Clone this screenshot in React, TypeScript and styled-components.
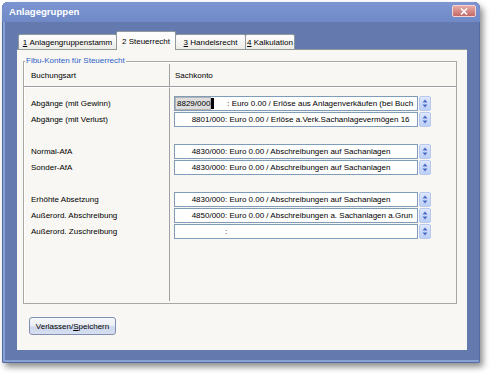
import React from 'react';
import styled, { createGlobalStyle } from 'styled-components';

const GlobalStyle = createGlobalStyle`
  html, body {
    margin: 0;
    padding: 0;
    background: #ffffff;
  }
  body {
    font-family: "Liberation Sans", Arial, sans-serif;
    font-size: 8px;
    color: #000000;
  }
`;

const Page = styled.div`
  width: 490px;
  height: 377px;
  padding: 2px 0 0 2px;
  box-sizing: border-box;
`;

const Window = styled.div`
  width: 478px;
  height: 361px;
  display: flex;
  flex-direction: column;
  background: #6479ad;
  border-radius: 6px 6px 2px 2px;
  box-shadow: 3px 4px 6px rgba(0, 0, 0, 0.45), inset 0 0 0 1px #566b9f,
    inset 2px 0 0 1px #8aa1d6, inset 0 -2px 0 1px #8aa1d6;
  overflow: hidden;
`;

const TitleBar = styled.div`
  height: 20px;
  flex: none;
  display: flex;
  align-items: center;
  justify-content: space-between;
  padding: 0 4px 0 7px;
  background: linear-gradient(#7d96d2, #6f89c7);
  border-radius: 6px 6px 0 0;
`;

const Title = styled.div`
  color: #ffffff;
  font-weight: bold;
  font-size: 9.6px;
  margin-top: -2px;
`;

const CloseButton = styled.div`
  width: 24px;
  height: 12px;
  box-sizing: border-box;
  margin-top: -2px;
  border: 1px solid #f3d4d0;
  border-radius: 2px;
  background: linear-gradient(#e7aba6, #c56a66);
  display: flex;
  align-items: center;
  justify-content: center;
`;

const Frame = styled.div`
  flex: 1;
  display: flex;
  flex-direction: column;
  padding: 10px 13px 13px 15px;
`;

const TabStrip = styled.div`
  height: 18px;
  display: flex;
  align-items: flex-end;
  padding-left: 1px;
  position: relative;
  z-index: 1;
  margin-bottom: -1px;
`;

const Tab = styled.div<{ $w: number; $active?: boolean }>`
  width: ${(p) => p.$w}px;
  height: ${(p) => (p.$active ? 19 : 16)}px;
  box-sizing: border-box;
  margin-left: -1px;
  &:first-child {
    margin-left: 0;
  }
  display: flex;
  align-items: center;
  justify-content: center;
  white-space: nowrap;
  border: 1px solid #919b9c;
  border-bottom: ${(p) => (p.$active ? 'none' : '1px solid #919b9c')};
  border-radius: 2px 2px 0 0;
  background: ${(p) =>
    p.$active ? 'linear-gradient(#ffffff, #f8f7f3)' : 'linear-gradient(#ffffff, #ecebe6)'};
  position: relative;
  z-index: ${(p) => (p.$active ? 2 : 1)};
`;

const Panel = styled.div`
  flex: 1;
  display: flex;
  flex-direction: column;
  background: #f8f7f3;
  border-top: 1px solid #919b9c;
  padding: 11px 10px 0 6px;
`;

const GroupBox = styled.div`
  position: relative;
  height: 243px;
  box-sizing: border-box;
  border: 1px solid #a9a9a4;
  box-shadow: inset 1px 1px 0 #ffffff;
  padding: 2px 0;
`;

const Legend = styled.div`
  position: absolute;
  top: -6px;
  left: 1px;
  padding: 0 1px;
  background: #f8f7f3;
  color: #2d61c8;
  line-height: 10px;
`;

const Table = styled.div`
  height: 100%;
  display: grid;
  grid-template-columns: 146px 1fr;
  grid-template-rows: 23px 1fr;
`;

const HeadCell = styled.div<{ $left?: boolean }>`
  display: flex;
  align-items: center;
  padding-left: ${(p) => (p.$left ? 7 : 5)}px;
  padding-top: 1px;
  border-bottom: 1px solid #a0a0a0;
  border-right: ${(p) => (p.$left ? '1px solid #a0a0a0' : 'none')};
`;

const BodyCell = styled.div<{ $left?: boolean }>`
  display: flex;
  flex-direction: column;
  gap: 1px;
  padding: 8px 0 0 ${(p) => (p.$left ? 7 : 4)}px;
  border-right: ${(p) => (p.$left ? '1px solid #a0a0a0' : 'none')};
  border-top: 1px solid #ffffff;
`;

const Label = styled.div`
  height: 15px;
  display: flex;
  align-items: center;
  white-space: nowrap;
`;

const Spacer = styled.div`
  height: 15px;
`;

const Combo = styled.div`
  height: 15px;
  width: 257px;
  display: flex;
  gap: 1px;
`;

const Field = styled.div`
  flex: 1;
  min-width: 0;
  box-sizing: border-box;
  border: 1px solid #7f9db9;
  background: #ffffff;
  display: flex;
  align-items: center;
  white-space: nowrap;
  overflow: hidden;
`;

const Account = styled.span`
  width: 50px;
  flex: none;
  text-align: right;
`;

const EditBox = styled.span`
  width: 50px;
  flex: none;
  display: flex;
  align-items: center;
  height: 13px;
`;

const EditText = styled.span`
  display: flex;
  align-items: center;
  height: 13px;
  padding: 0 1px 0 2px;
  background: #dedede;
  box-shadow: inset 0 0 0 1px #b4b4b4;
`;

const Caret = styled.span`
  width: 3px;
  height: 11px;
  background: #000000;
`;

const Rest = styled.span`
  flex: none;
`;

const ArrowButton = styled.div`
  width: 12px;
  flex: none;
  box-sizing: border-box;
  border: 1px solid #b7c8f0;
  border-radius: 2px;
  background: linear-gradient(#dde7fc, #bccff7);
  display: flex;
  align-items: center;
  justify-content: center;
`;

const Footer = styled.div`
  padding: 13px 0 0 6px;
`;

const Button = styled.div`
  width: 87px;
  height: 18px;
  box-sizing: border-box;
  border: 1px solid #8190b2;
  border-radius: 3px;
  background: linear-gradient(#f6f7fa 0%, #e9edf5 50%, #cdd7ec 55%, #d7dff0 100%);
  display: flex;
  align-items: center;
  justify-content: center;
  white-space: nowrap;
`;

type Row =
  | null
  | {
      label: string;
      account: string;
      rest: string;
      editing?: boolean;
    };

const rows: Row[] = [
  {
    label: 'Abgänge (mit Gewinn)',
    account: '8829/000',
    rest: '\u00a0: Euro 0.00 / Erlöse aus Anlagenverkäufen (bei Buch',
    editing: true,
  },
  {
    label: 'Abgänge (mit Verlust)',
    account: '8801/000',
    rest: ': Euro 0.00 / Erlöse a.Verk.Sachanlagevermögen 16',
  },
  null,
  {
    label: 'Normal-AfA',
    account: '4830/000',
    rest: ': Euro 0.00 / Abschreibungen auf Sachanlagen',
  },
  {
    label: 'Sonder-AfA',
    account: '4830/000',
    rest: ': Euro 0.00 / Abschreibungen auf Sachanlagen',
  },
  null,
  {
    label: 'Erhöhte Absetzung',
    account: '4830/000',
    rest: ': Euro 0.00 / Abschreibungen auf Sachanlagen',
  },
  {
    label: 'Außerord. Abschreibung',
    account: '4850/000',
    rest: ': Euro 0.00 / Abschreibungen a. Sachanlagen a.Grun',
  },
  {
    label: 'Außerord. Zuschreibung',
    account: '',
    rest: ':',
  },
];

const UpDownIcon = () => (
  <svg width="6" height="9" viewBox="0 0 6 9">
    <path d="M3 0.5 L5.5 3.5 H0.5 Z" fill="#4a6cc3" />
    <path d="M3 8.5 L5.5 5.5 H0.5 Z" fill="#4a6cc3" />
  </svg>
);

const CloseIcon = () => (
  <svg width="8" height="7" viewBox="0 0 8 7">
    <path d="M1 0.5 L7 6.5 M7 0.5 L1 6.5" stroke="#ffffff" strokeWidth="1.6" />
  </svg>
);

const App: React.FC = () => {
  return (
    <>
      <GlobalStyle />
      <Page>
        <Window>
          <TitleBar>
            <Title>Anlagegruppen</Title>
            <CloseButton>
              <CloseIcon />
            </CloseButton>
          </TitleBar>
          <Frame>
            <TabStrip>
              <Tab $w={99}>
                <u>1</u>&nbsp;Anlagengruppenstamm
              </Tab>
              <Tab $w={60} $active>
                2 Steuerrecht
              </Tab>
              <Tab $w={71}>
                <u>3</u>&nbsp;Handelsrecht
              </Tab>
              <Tab $w={50}>
                <u>4</u>&nbsp;Kalkulation
              </Tab>
            </TabStrip>
            <Panel>
              <GroupBox>
                <Legend>Fibu-Konten für Steuerrecht</Legend>
                <Table>
                  <HeadCell $left>Buchungsart</HeadCell>
                  <HeadCell>Sachkonto</HeadCell>
                  <BodyCell $left>
                    {rows.map((r, i) =>
                      r ? <Label key={i}>{r.label}</Label> : <Spacer key={i} />
                    )}
                  </BodyCell>
                  <BodyCell>
                    {rows.map((r, i) =>
                      r ? (
                        <Combo key={i}>
                          <Field>
                            {r.editing ? (
                              <EditBox>
                                <EditText>{r.account}</EditText>
                                <Caret />
                              </EditBox>
                            ) : (
                              <Account>{r.account || '\u00a0'}</Account>
                            )}
                            <Rest>{r.rest}</Rest>
                          </Field>
                          <ArrowButton>
                            <UpDownIcon />
                          </ArrowButton>
                        </Combo>
                      ) : (
                        <Spacer key={i} />
                      )
                    )}
                  </BodyCell>
                </Table>
              </GroupBox>
              <Footer>
                <Button>
                  Verlassen/<u>S</u>peichern
                </Button>
              </Footer>
            </Panel>
          </Frame>
        </Window>
      </Page>
    </>
  );
};

export default App;
